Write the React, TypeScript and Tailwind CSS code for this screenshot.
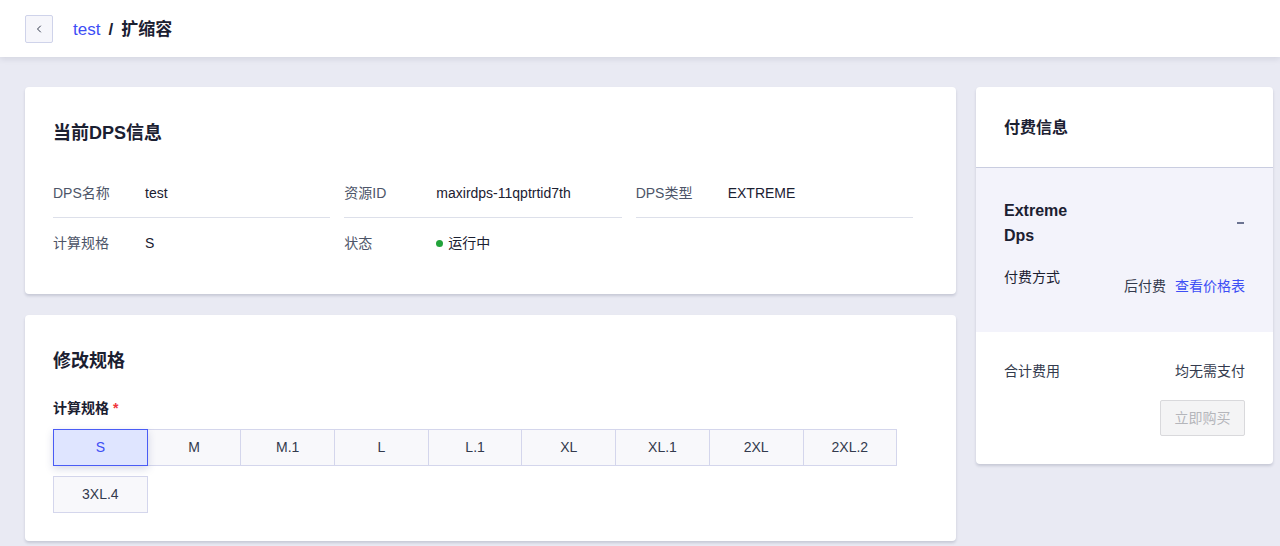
import { ChevronLeft } from "lucide-react";

const INFO_ROWS = [
  [
    { label: "DPS名称", value: "test" },
    { label: "资源ID", value: "maxirdps-11qptrtid7th" },
    { label: "DPS类型", value: "EXTREME" },
  ],
  [
    { label: "计算规格", value: "S" },
    { label: "状态", value: "运行中", status: true },
    null,
  ],
];

const SPECS = ["S", "M", "M.1", "L", "L.1", "XL", "XL.1", "2XL", "2XL.2", "3XL.4"];

const card = "bg-white rounded-[4px] shadow-[0_2px_3px_rgba(20,25,60,0.16)]";

export default function App() {
  return (
    <div
      className="min-h-[546px] bg-[#e9eaf3] text-[#1b2031]"
      style={{ fontFamily: '"Liberation Sans", "Noto Sans CJK SC", sans-serif' }}
    >
      <header className="h-[57px] bg-white flex items-center pl-[25px] shadow-[0_2px_6px_rgba(20,25,60,0.1)] relative z-10">
        <button className="w-[28px] h-[28px] flex items-center justify-center border border-[#cfd3ea] bg-[#f6f6fb] rounded-[2px] text-[#333a4d]">
          <ChevronLeft size={12} strokeWidth={2} />
        </button>
        <div className="ml-[20px] flex items-center text-[17px] leading-[20px] pt-[2px]">
          <span className="text-[#3d4ef5]">test</span>
          <span className="mx-[8px] font-bold text-[#1b2031]">/</span>
          <span className="font-bold text-[#1b2031]">扩缩容</span>
        </div>
      </header>

      <div className="flex gap-[20px] pl-[25px] pr-[7px] pt-[30px]">
        <div className="flex-1 flex flex-col gap-[21px]">
          <section className={`${card} pt-[34px] pb-[26px] pl-[28px] pr-[43px]`}>
            <h2 className="text-[18px] leading-[24px] font-bold">当前DPS信息</h2>
            <div className="mt-[24px] text-[14px]">
              {INFO_ROWS.map((row, ri) => (
                <div key={ri} className="grid grid-cols-3 gap-x-[14px]">
                  {row.map((cell, ci) => (
                    <div
                      key={ci}
                      className={`flex items-center ${ri === 0 ? "h-[49px] border-b border-[#dde0ea]" : "h-[50px]"}`}
                    >
                      {cell && (
                        <>
                          <span className="w-[92px] shrink-0 text-[#4d5568]">{cell.label}</span>
                          <span className="flex items-center text-[#1b2031]">
                            {cell.status && (
                              <span className="w-[7px] h-[7px] rounded-full bg-[#22a33a] mr-[5px]" />
                            )}
                            {cell.value}
                          </span>
                        </>
                      )}
                    </div>
                  ))}
                </div>
              ))}
            </div>
          </section>

          <section className={`${card} pt-[34px] pb-[28px] px-[28px]`}>
            <h2 className="text-[18px] leading-[24px] font-bold">修改规格</h2>
            <div className="mt-[25px] text-[14px] leading-[20px] font-bold">
              计算规格 <span className="text-[#f0353b]">*</span>
            </div>
            <div className="mt-[11px] flex flex-wrap gap-y-[10px] text-[14px]">
              {SPECS.map((s, i) => (
                <button
                  key={s}
                  className={`w-[94.7px] h-[37px] -mr-px flex items-center justify-center border ${
                    i === 0
                      ? "relative z-10 bg-[#dfe5ff] border-[#4a5cf5] text-[#3d4ef5] shadow-[0_3px_8px_rgba(40,50,120,0.18)]"
                      : "bg-[#f8f8fb] border-[#d4d6ec] text-[#333a4d]"
                  }`}
                >
                  {s}
                </button>
              ))}
            </div>
          </section>
        </div>

        <aside className={`${card} w-[297px] self-start overflow-hidden`}>
          <div className="h-[81px] flex items-center px-[28px] border-b border-[#c9cde0]">
            <h3 className="text-[16px] font-bold pt-[1px]">付费信息</h3>
          </div>
          <div className="bg-[#f3f3fb] px-[28px] pt-[30px] pb-[36px]">
            <div className="flex items-center justify-between">
              <div className="w-[80px] text-[16px] leading-[25px] font-bold">Extreme Dps</div>
              <span className="w-[7px] h-[2px] bg-[#6b7391] mr-[1px]" />
            </div>
            <div className="mt-[19px] flex justify-between text-[14px] leading-[20px]">
              <span>付费方式</span>
              <div className="mt-[9px] flex gap-[9px]">
                <span className="text-[#333a4d]">后付费</span>
                <span className="text-[#3d4ef5]">查看价格表</span>
              </div>
            </div>
          </div>
          <div className="px-[28px] pt-[29px] pb-[28px]">
            <div className="flex justify-between text-[14px] leading-[20px] text-[#333a4d]">
              <span>合计费用</span>
              <span>均无需支付</span>
            </div>
            <div className="mt-[19px] flex justify-end">
              <button className="w-[85px] h-[36px] bg-[#f4f4f5] border border-[#d9d9dc] rounded-[2px] text-[14px] text-[#b5b6bb]">
                立即购买
              </button>
            </div>
          </div>
        </aside>
      </div>
    </div>
  );
}
